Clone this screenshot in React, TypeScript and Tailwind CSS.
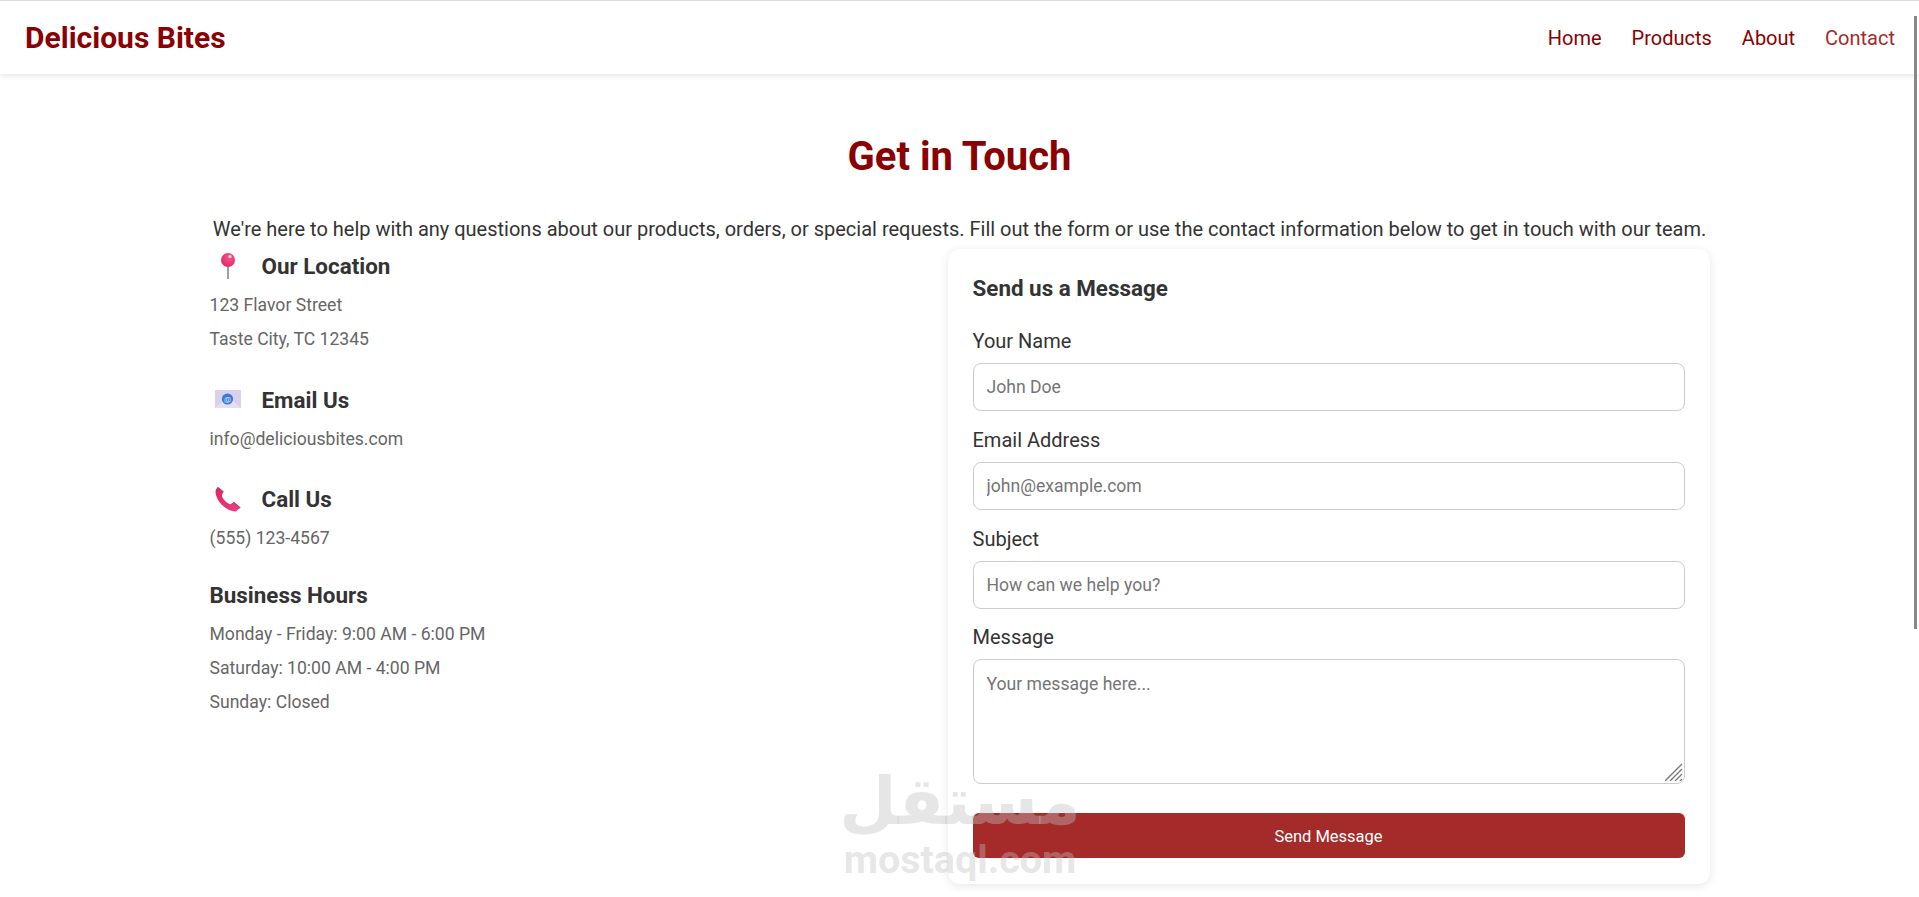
import React from 'react';

const PinIcon = () => (
  <svg width="16" height="28" viewBox="0 0 16 28">
    <defs>
      <radialGradient id="pinBall" cx="0.6" cy="0.3" r="0.8">
        <stop offset="0" stopColor="#f7568f" />
        <stop offset="1" stopColor="#e0245e" />
      </radialGradient>
    </defs>
    <rect x="7" y="12" width="2" height="15" fill="#9aa0ac" />
    <circle cx="8" cy="8" r="7" fill="url(#pinBall)" />
    <circle cx="10" cy="4.5" r="1.6" fill="#fbd5e2" />
  </svg>
);

const MailIcon = () => (
  <svg width="26" height="19" viewBox="0 0 26 19">
    <defs>
      <linearGradient id="mailBg" x1="0" y1="0" x2="1" y2="1">
        <stop offset="0" stopColor="#d5d2e6" />
        <stop offset="1" stopColor="#dcd0ee" />
      </linearGradient>
    </defs>
    <rect x="0" y="0" width="26" height="18" fill="url(#mailBg)" />
    <path d="M0 18 L8 11 L18 11 L26 18 Z" fill="#e6dff2" />
    <circle cx="12.5" cy="9" r="5.6" fill="#3b78d8" />
    <text x="12.5" y="11.8" textAnchor="middle" fontSize="8" fill="#d7e5fa">
      @
    </text>
  </svg>
);

const PhoneIcon = () => (
  <svg width="26" height="26" viewBox="0 0 26 26">
    <defs>
      <linearGradient id="phoneBg" x1="0" y1="0" x2="1" y2="1">
        <stop offset="0" stopColor="#e0245e" />
        <stop offset="1" stopColor="#ef3f86" />
      </linearGradient>
    </defs>
    <path
      d="M3 1 L8.5 5.5 L6.8 9.5 C8 13.5 11.5 17 15.5 18.2 L19 16 L25.5 21.5 L21 25.5 C11 25.5 1 15 0.5 6 C0.5 4 1.5 2 3 1 Z"
      fill="url(#phoneBg)"
    />
    <path d="M3 1 L8.5 5.5 L7.8 7 L2.4 2 Z" fill="#a9478f" />
    <path d="M19 16 L25.5 21.5 L24.4 22.6 L18 17 Z" fill="#a9478f" />
  </svg>
);

const InfoBlock = ({
  icon,
  title,
  lines,
}: {
  icon?: React.ReactNode;
  title: string;
  lines: string[];
}) => (
  <div className="mb-[26.5px]">
    {icon ? (
      <div className="flex items-center h-[34px] mb-[5px]">
        <span className="w-9 mr-4 flex justify-center items-center">{icon}</span>
        <h3 className="text-[22.4px] leading-[30px] font-bold text-[#333333]">{title}</h3>
      </div>
    ) : (
      <h3 className="h-[26px] mb-[9px] text-[22.4px] leading-[26px] font-bold text-[#333333]">
        {title}
      </h3>
    )}
    {lines.map(line => (
      <p key={line} className="text-[17.6px] leading-[34px] text-[#666666]">
        {line}
      </p>
    ))}
  </div>
);

const fields = [
  { label: 'Your Name', placeholder: 'John Doe' },
  { label: 'Email Address', placeholder: 'john@example.com' },
  { label: 'Subject', placeholder: 'How can we help you?' },
];

const App = () => {
  return (
    <div className="relative h-[897px] overflow-hidden bg-white font-[Roboto,sans-serif]">
      <nav className="flex justify-between items-center h-[74px] pl-[25px] pr-[24px] bg-white border-t border-[#dddddd] shadow-[0_2px_5px_rgba(0,0,0,0.1)]">
        <span className="text-[30px] font-bold text-[#8b0000]">Delicious Bites</span>
        <div className="flex gap-[30px] text-[20px] text-[#8b0000]">
          <a>Home</a>
          <a>Products</a>
          <a>About</a>
          <a className="text-[#a52a2a]">Contact</a>
        </div>
      </nav>

      <main className="w-[1500px] mx-auto">
        <h1 className="mt-[58px] text-center text-[40px] leading-[50px] font-bold text-[#8b0000]">
          Get in Touch
        </h1>
        <p className="mt-[33px] text-center text-[20px] leading-[29px] text-[#333333] whitespace-nowrap">
          We're here to help with any questions about our products, orders, or special requests. Fill out the form or use the contact information below to get in touch with our team.
        </p>

        <div className="grid grid-cols-[738px_762px] mt-[5px]">
          <div>
            <InfoBlock
              icon={<PinIcon />}
              title="Our Location"
              lines={['123 Flavor Street', 'Taste City, TC 12345']}
            />
            <InfoBlock
              icon={<MailIcon />}
              title="Email Us"
              lines={['info@deliciousbites.com']}
            />
            <InfoBlock
              icon={<PhoneIcon />}
              title="Call Us"
              lines={['(555) 123-4567']}
            />
            <InfoBlock
              title="Business Hours"
              lines={[
                'Monday - Friday: 9:00 AM - 6:00 PM',
                'Saturday: 10:00 AM - 4:00 PM',
                'Sunday: Closed',
              ]}
            />
          </div>

          <form className="h-[635px] p-[25px] rounded-xl bg-white shadow-[0_2px_10px_rgba(0,0,0,0.1)]">
            <h3 className="text-[22.4px] leading-[28px] font-bold text-[#333333] mb-[27px]">
              Send us a Message
            </h3>
            {fields.map(field => (
              <div key={field.label} className="mb-[16.8px]">
                <label className="block text-[20px] leading-[24px] mb-[10px] text-[#333333]">
                  {field.label}
                </label>
                <input
                  className="block w-full h-[48px] px-[13px] text-[17.6px] border border-[#cccccc] rounded-lg placeholder:text-[#757575]"
                  placeholder={field.placeholder}
                />
              </div>
            ))}
            <div>
              <label className="block text-[20px] leading-[24px] mb-[10px] text-[#333333]">
                Message
              </label>
              <div className="relative">
                <textarea
                  className="block w-full h-[125px] px-[13px] py-[11px] text-[17.6px] border border-[#cccccc] rounded-lg resize-none placeholder:text-[#757575]"
                  placeholder="Your message here..."
                />
                {/* resize grip */}
                <svg
                  className="absolute right-[2px] bottom-[3px]"
                  width="18"
                  height="18"
                  viewBox="0 0 18 18"
                >
                  <path
                    d="M0 18 L17 1 M5 18 L17 6 M10 18 L17 11 M15 18 L17 16"
                    stroke="#7a7a7a"
                    strokeWidth="1.4"
                    fill="none"
                  />
                </svg>
              </div>
            </div>
            <button
              type="button"
              className="block w-full h-[45px] mt-[29px] pt-[2px] rounded-md bg-[#a52a2a] text-white text-[16.5px]"
            >
              Send Message
            </button>
          </form>
        </div>
      </main>

      {/* watermark sits above the page */}
      <div className="absolute left-[844px] top-[762px] w-[232px] flex flex-col items-center pointer-events-none text-[#c0c0c0]/40">
        <span className="font-['DejaVu_Sans',sans-serif] font-bold text-[66px] leading-[80px]">مستقل</span>
        <span className="font-[Roboto,sans-serif] font-bold text-[39.5px] leading-[36px]">mostaql.com</span>
      </div>

      {/* scrollbar thumb */}
      <div className="absolute left-[1914px] top-[16px] w-[3px] h-[613px] bg-[#888888]" />
    </div>
  );
};

export default App;
